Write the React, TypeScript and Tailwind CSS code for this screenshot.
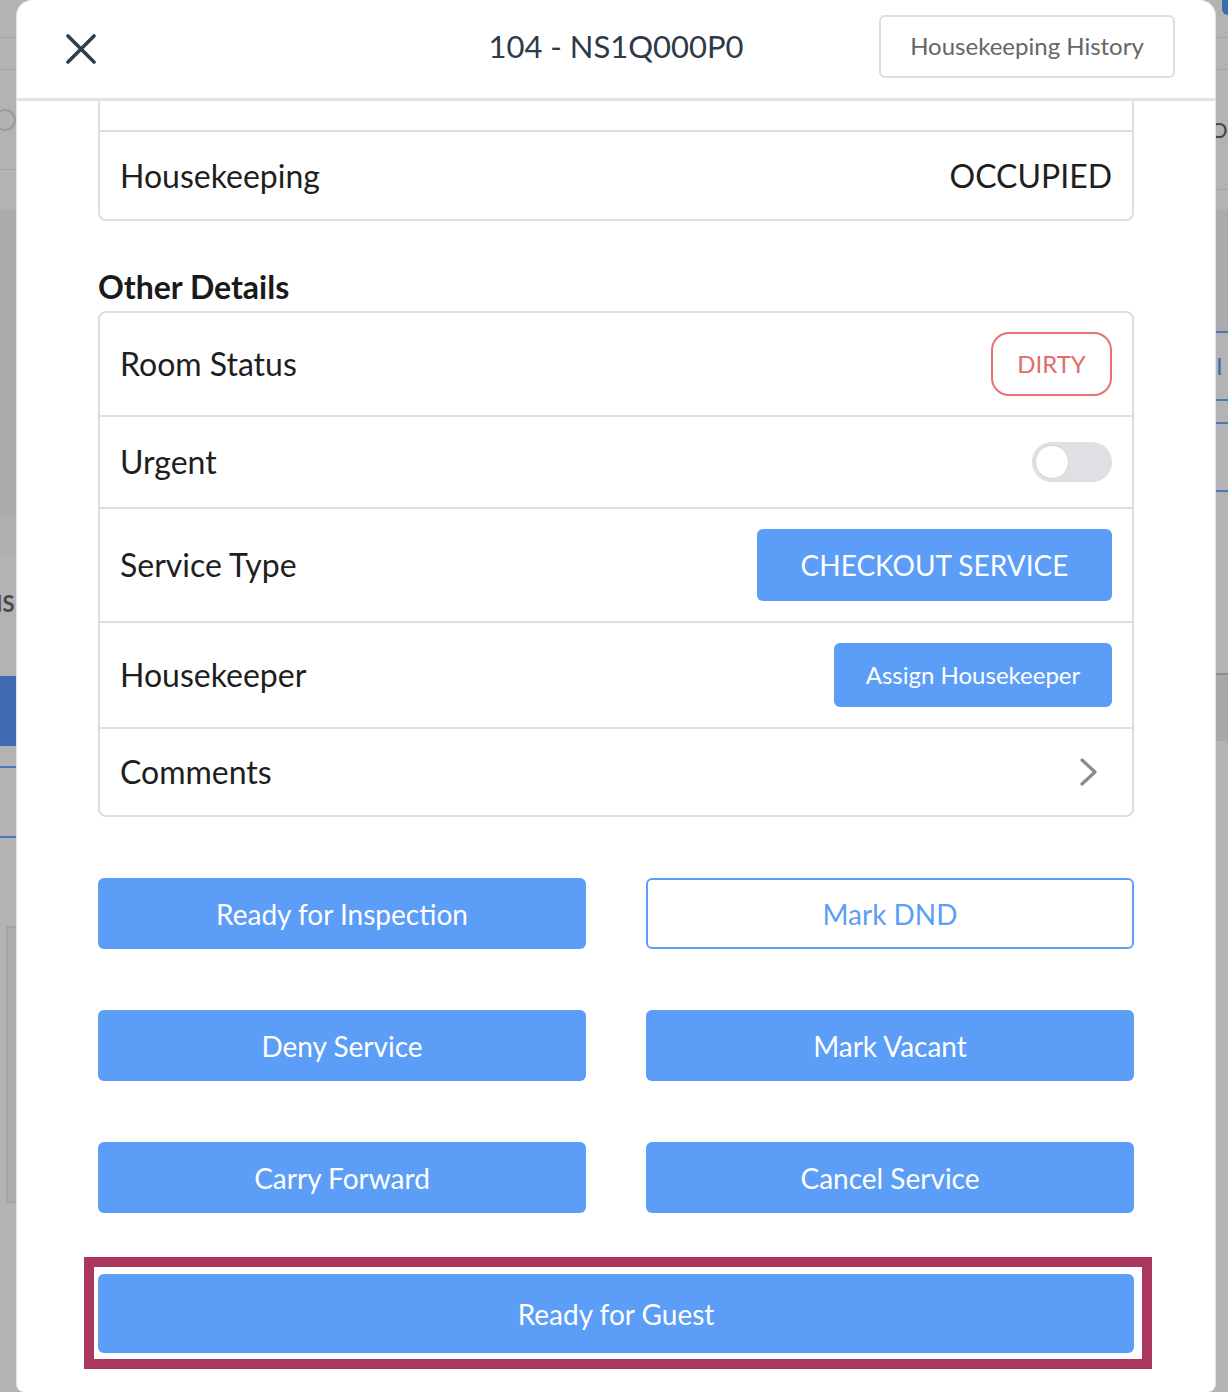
import React from 'react';

const blue = 'bg-[#5c9df7] text-white';

function Row({ label, children, h, first }: { label: string; children?: React.ReactNode; h: string; first?: boolean }) {
  return (
    <div className={`flex items-center justify-between px-5 ${h} ${first ? '' : 'border-t-2 border-[#dedede]'}`}>
      <span className="text-[32px] text-[#1e1e1e]">{label}</span>
      {children}
    </div>
  );
}

function LeftStrip() {
  return (
    <div className="w-[16px] shrink-0 flex flex-col bg-[#b3b3b3]">
      <div className="h-[38px] border-b border-[#a2a2a2]" />
      <div className="h-[32px] border-b border-[#a2a2a2]" />
      <div className="h-[100px] border-b border-[#a2a2a2] flex items-center">
        <div className="size-[22px] -ml-[6px] rounded-full border-2 border-[#9a9aa2]" />
      </div>
      <div className="h-[40px]" />
      <div className="h-[305px] bg-[#ababab]" />
      <div className="h-[40px] bg-[#b0b0b0]" />
      <div className="h-[121px] pt-[36px] overflow-hidden">
        <span className="block leading-[26px] text-[22px] font-bold text-[#4a4a4a] -ml-[4px] font-['Lato',sans-serif]">IS</span>
      </div>
      <div className="h-[70px] bg-[#3e6bb0]" />
      <div className="h-[22px] border-b-2 border-[#4a78bd]" />
      <div className="h-[70px] border-b-2 border-[#4a78bd]" />
      <div className="h-[88px]" />
      <div className="h-[277px] ml-[6px] border-l-2 border-y-2 border-[#a3a3a3] bg-[#adadad]" />
    </div>
  );
}

function RightStrip() {
  return (
    <div className="w-[12px] shrink-0 flex flex-col bg-[#b3b3b3]">
      <div className="h-[15px] ml-[6px] rounded-bl-[6px] bg-[#3e6bb0]" />
      <div className="h-[23px] border-b border-[#a2a2a2]" />
      <div className="h-[32px] border-b border-[#a2a2a2]" />
      <div className="h-[120px] border-b border-[#a2a2a2] flex items-center overflow-hidden">
        <span className="text-[22px] text-[#444] -ml-[6px] font-['Lato',sans-serif]">O</span>
      </div>
      <div className="h-[20px]" />
      <div className="h-[123px] bg-[#ababab] border-b-2 border-[#4a78bd]" />
      <div className="h-[68px] border-b-2 border-[#4a78bd] flex items-center overflow-hidden">
        <span className="text-[24px] text-[#3e6bb0] font-['Lato',sans-serif]">I</span>
      </div>
      <div className="h-[23px] border-b-2 border-[#4a78bd]" />
      <div className="h-[68px] border-b-2 border-[#4a78bd]" />
      <div className="h-[50px]" />
      <div className="h-[133px] border-b-2 border-[#8c8c8c]" />
      <div className="h-[66px] bg-[#a8a8a8]" />
    </div>
  );
}

export default function App() {
  return (
    <div className="flex h-[1392px] w-full overflow-hidden bg-[#b3b3b3] font-['Lato','Noto_Sans',sans-serif]">
      <LeftStrip />
      <div className="flex-1 flex flex-col bg-white rounded-t-[16px] rounded-b-[8px] overflow-hidden border-x border-[#e6e6e6]">
        <header className="h-[101px] shrink-0 grid grid-cols-[1fr_auto_1fr] items-center border-b-[3px] border-[#e3e3e3]">
          <div className="pl-[49px]">
            <svg width="30" height="30" viewBox="0 0 30 30" fill="none" stroke="#2c3e50" strokeWidth="3.6" strokeLinecap="round">
              <path d="M2 2 L28 28 M28 2 L2 28" />
            </svg>
          </div>
          <h1 className="text-[31px] text-[#2c3a4a] pb-[6px]">104 - NS1Q000P0</h1>
          <div className="flex justify-end pr-[40px] pb-[6px]">
            <button className="h-[63px] w-[296px] rounded-[6px] border-2 border-[#dedee2] text-[24px] text-[#666] bg-white">
              Housekeeping History
            </button>
          </div>
        </header>

        <div className="px-[81px] flex flex-col">
          <div className="border-x-2 border-b-2 border-[#dedede] rounded-b-[8px]">
            <div className="h-[29px]" />
            <Row label="Housekeeping" h="h-[89px]">
              <span className="text-[32px] text-[#1e1e1e]">OCCUPIED</span>
            </Row>
          </div>

          <h2 className="mt-[46px] mb-[4px] h-[40px] leading-[40px] text-[32px] font-bold text-[#1a1a1a]">Other Details</h2>

          <div className="border-2 border-[#dedede] rounded-[8px]">
            <Row label="Room Status" h="h-[102px]" first>
              <span className="h-[64px] w-[121px] flex items-center justify-center rounded-[18px] border-2 border-[#e57373] text-[24px] text-[#e06c6a]">
                DIRTY
              </span>
            </Row>
            <Row label="Urgent" h="h-[92px]">
              <span className="h-[40px] w-[80px] rounded-full bg-[#dfe0e4] flex items-center px-[3px]">
                <span className="size-[34px] rounded-full bg-white border border-[#d6d6da]" />
              </span>
            </Row>
            <Row label="Service Type" h="h-[114px]">
              <button className={`h-[72px] w-[355px] rounded-[6px] text-[28px] ${blue}`}>CHECKOUT SERVICE</button>
            </Row>
            <Row label="Housekeeper" h="h-[106px]">
              <button className={`h-[64px] w-[278px] rounded-[6px] text-[24px] ${blue}`}>Assign Housekeeper</button>
            </Row>
            <Row label="Comments" h="h-[88px]">
              <svg width="20" height="30" viewBox="0 0 20 30" fill="none" stroke="#8a8a8a" strokeWidth="3.2" strokeLinecap="round" strokeLinejoin="round" className="mr-[13px]">
                <path d="M3 3 L16 15 L3 27" />
              </svg>
            </Row>
          </div>

          <div className="mt-[61px] grid grid-cols-2 gap-x-[60px] gap-y-[61px]">
            <button className={`h-[71px] rounded-[6px] text-[28px] ${blue}`}>Ready for Inspection</button>
            <button className="h-[71px] rounded-[6px] text-[28px] bg-white border-2 border-[#5c9df7] text-[#5c9df7]">Mark DND</button>
            <button className={`h-[71px] rounded-[6px] text-[28px] ${blue}`}>Deny Service</button>
            <button className={`h-[71px] rounded-[6px] text-[28px] ${blue}`}>Mark Vacant</button>
            <button className={`h-[71px] rounded-[6px] text-[28px] ${blue}`}>Carry Forward</button>
            <button className={`h-[71px] rounded-[6px] text-[28px] ${blue}`}>Cancel Service</button>
          </div>

          <div className="relative mt-[61px]">
            <button className={`w-full h-[79px] rounded-[6px] text-[28px] ${blue}`}>Ready for Guest</button>
            <div className="pointer-events-none absolute -left-[14px] -right-[18px] -top-[17px] -bottom-[16px] border-[10px] border-[#ab375d]" />
          </div>
        </div>
      </div>
      <RightStrip />
    </div>
  );
}
